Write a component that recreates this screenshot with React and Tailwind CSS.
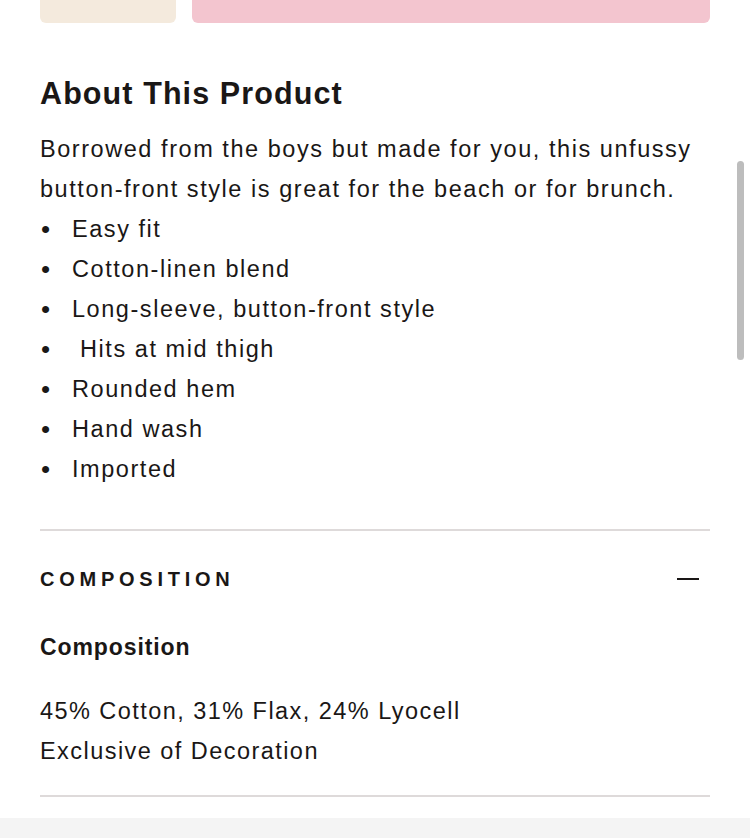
export default function App() {
  const bullets = [
    "Easy fit",
    "Cotton-linen blend",
    "Long-sleeve, button-front style",
    "\u00a0Hits at mid thigh",
    "Rounded hem",
    "Hand wash",
    "Imported",
  ];
  return (
    <div className="relative w-[750px] h-[838px] overflow-hidden bg-white text-[#1a1716]" style={{ fontFamily: '"Liberation Sans", Arial, sans-serif' }}>
      <div className="px-10">
        <div className="flex gap-4">
          <div className="w-[136px] h-[23px] bg-[#f4eadd] rounded-b-md"></div>
          <div className="flex-1 h-[23px] bg-[#f3c5cf] rounded-b-md"></div>
        </div>
        <h2 className="mt-[50px] text-[30.5px] leading-[40px] font-bold tracking-[1.1px]">About This Product</h2>
        <p className="mt-[16px] text-[23.5px] leading-[40px] tracking-[1.55px]">
          Borrowed from the boys but made for you, this unfussy button-front style is great for the beach or for brunch.
        </p>
        <ul className="text-[23.5px] leading-[40px] tracking-[1.55px]">
          {bullets.map((b) => (
            <li key={b} className="flex">
              <span className="w-[32px] shrink-0 pl-[1px] text-[26px]">•</span>
              <span>{b}</span>
            </li>
          ))}
        </ul>
        <div className="mt-[40px] h-[2px] bg-[#dedada]"></div>
        <div className="h-[96px] flex items-center justify-between">
          <span className="text-[20px] font-bold tracking-[4.75px]">COMPOSITION</span>
          <span className="w-[22px] h-[2px] bg-[#1a1716] mr-[11px]"></span>
        </div>
        <div className="text-[23px] font-semibold leading-[40px] tracking-[0.9px]">Composition</div>
        <div className="mt-[24px] text-[23.5px] leading-[40px] tracking-[1.45px]">
          <div>45% Cotton, 31% Flax, 24% Lyocell</div>
          <div>Exclusive of Decoration</div>
        </div>
        <div className="mt-[24px] h-[2px] bg-[#dedada]"></div>
      </div>
      <div className="mt-[21px] h-[40px] bg-[#f4f4f4]"></div>
      <div className="absolute left-[737px] top-[161px] w-[7px] h-[199px] rounded-full bg-[#bdbdbd]"></div>
    </div>
  );
}
